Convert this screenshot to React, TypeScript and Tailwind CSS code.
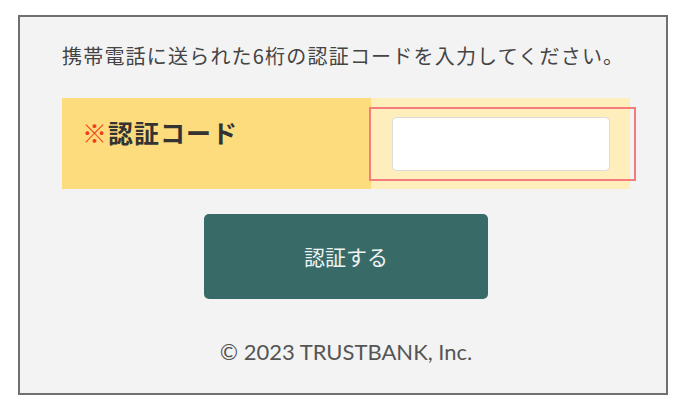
export default function App() {
  return (
    <div
      className="w-[673px] h-[409px] bg-white pt-[15px] pl-[18px]"
      style={{ fontFamily: '"Noto Sans CJK JP", "Noto Sans", sans-serif' }}
    >
      <div className="w-[650px] h-[380px] border-2 border-[#707070] bg-[#f3f3f3] pt-[25px] pl-[42px] pr-[36px]">
        <p className="text-[20px] leading-[28px] tracking-[1.2px] text-[#444444] whitespace-nowrap">
          携帯電話に送られた6桁の認証コードを入力してください。
        </p>

        {/* code row */}
        <div className="relative mt-[28px] flex h-[91px] w-[568px]">
          <div className="w-[309px] bg-[#fcdc7c] pl-[20px] pt-[18px]">
            <span className="text-[25px] leading-[32px] tracking-[1px] font-bold text-[#333333] whitespace-nowrap">
              <span className="text-[#f03c1e]">※</span>認証コード
            </span>
          </div>
          <div className="flex-1 bg-[#fdeebb] pl-[21px] pt-[19px]">
            <input
              type="text"
              className="h-[54px] w-[218px] rounded-[5px] border border-[#dcdcdc] bg-white outline-none"
            />
          </div>
          {/* highlight frame */}
          <div className="absolute left-[307px] top-[9px] h-[74px] w-[267px] border-2 border-[#f47c7c]" />
        </div>

        <div className="mt-[25px] flex w-[568px] justify-center">
          <button className="h-[85px] w-[284px] rounded-[5px] bg-[#386a68] text-[21px] text-[#eef4f3]">
            認証する
          </button>
        </div>

        <p
          className="mt-[39px] w-[568px] text-center text-[22px] leading-[28px] text-[#555555]"
          style={{ fontFamily: 'Lato, "Noto Sans CJK JP", sans-serif' }}
        >
          © 2023 TRUSTBANK, Inc.
        </p>
      </div>
    </div>
  );
}
